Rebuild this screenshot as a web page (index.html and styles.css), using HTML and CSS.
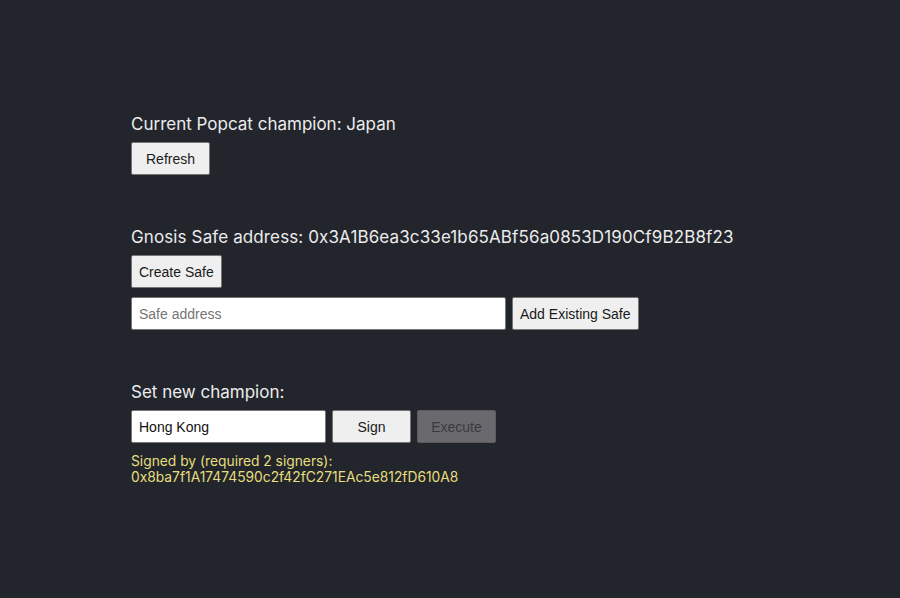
FILE: index.html
```html
<!DOCTYPE html>
<html>
<head>
<meta charset="utf-8">
<link rel="stylesheet" href="styles.css">
</head>
<body>
<main class="app">
  <section class="block">
    <h2 class="title">Current Popcat champion: Japan</h2>
    <div class="row"><button class="btn">Refresh</button></div>
  </section>
  <section class="block">
    <h2 class="title title-addr">Gnosis Safe address: 0x3A1B6ea3c33e1b65ABf56a0853D190Cf9B2B8f23</h2>
    <div class="row"><button class="btn">Create Safe</button></div>
    <div class="row row-gap">
      <input class="field field-wide" placeholder="Safe address">
      <button class="btn">Add Existing Safe</button>
    </div>
  </section>
  <section class="block">
    <h2 class="title">Set new champion:</h2>
    <div class="row">
      <input class="field field-narrow" value="Hong Kong">
      <button class="btn">Sign</button>
      <button class="btn" disabled>Execute</button>
    </div>
    <p class="signers">Signed by (required 2 signers):<br>0x8ba7f1A17474590c2f42fC271EAc5e812fD610A8</p>
  </section>
</main>
</body>
</html>
```
FILE: styles.css
```css
html, body {
  margin: 0;
  padding: 0;
  background: #23252d;
  height: 100%;
}
.app {
  padding: 112px 0 0 131px;
  font-family: Inter, "Noto Sans", sans-serif;
  color: #ececec;
}
.block {
  margin-bottom: 50px;
}
.title {
  margin: 0 0 6px 0;
  font-size: 17px;
  font-weight: 400;
  line-height: 24px;
}
.title-addr {
  letter-spacing: 0.12px;
}
.row {
  display: flex;
  gap: 6px;
}
.row-gap {
  margin-top: 9px;
}
.btn {
  font-family: "Liberation Sans", Arial, sans-serif;
  font-size: 14px;
  color: #1a1a1a;
  background: #efefef;
  border: 1px solid #767676;
  border-radius: 2px;
  height: 33px;
  min-width: 79px;
  padding: 0 7px;
  margin: 0;
}
.btn:disabled {
  background: #6a6a6e;
  color: #3a3a3e;
  border-color: #5c5c60;
}
.field {
  font-family: "Liberation Sans", Arial, sans-serif;
  font-size: 14px;
  height: 33px;
  box-sizing: border-box;
  border: 1px solid #767676;
  border-radius: 2px;
  background: #fff;
  color: #111;
  padding: 0 7px;
  margin: 0;
}
.field::placeholder {
  color: #757575;
}
.field-wide {
  width: 375px;
}
.field-narrow {
  width: 195px;
}
.signers {
  margin: 10px 0 0 0;
  font-size: 13.8px;
  line-height: 16px;
  color: #e6df7c;
}
```
